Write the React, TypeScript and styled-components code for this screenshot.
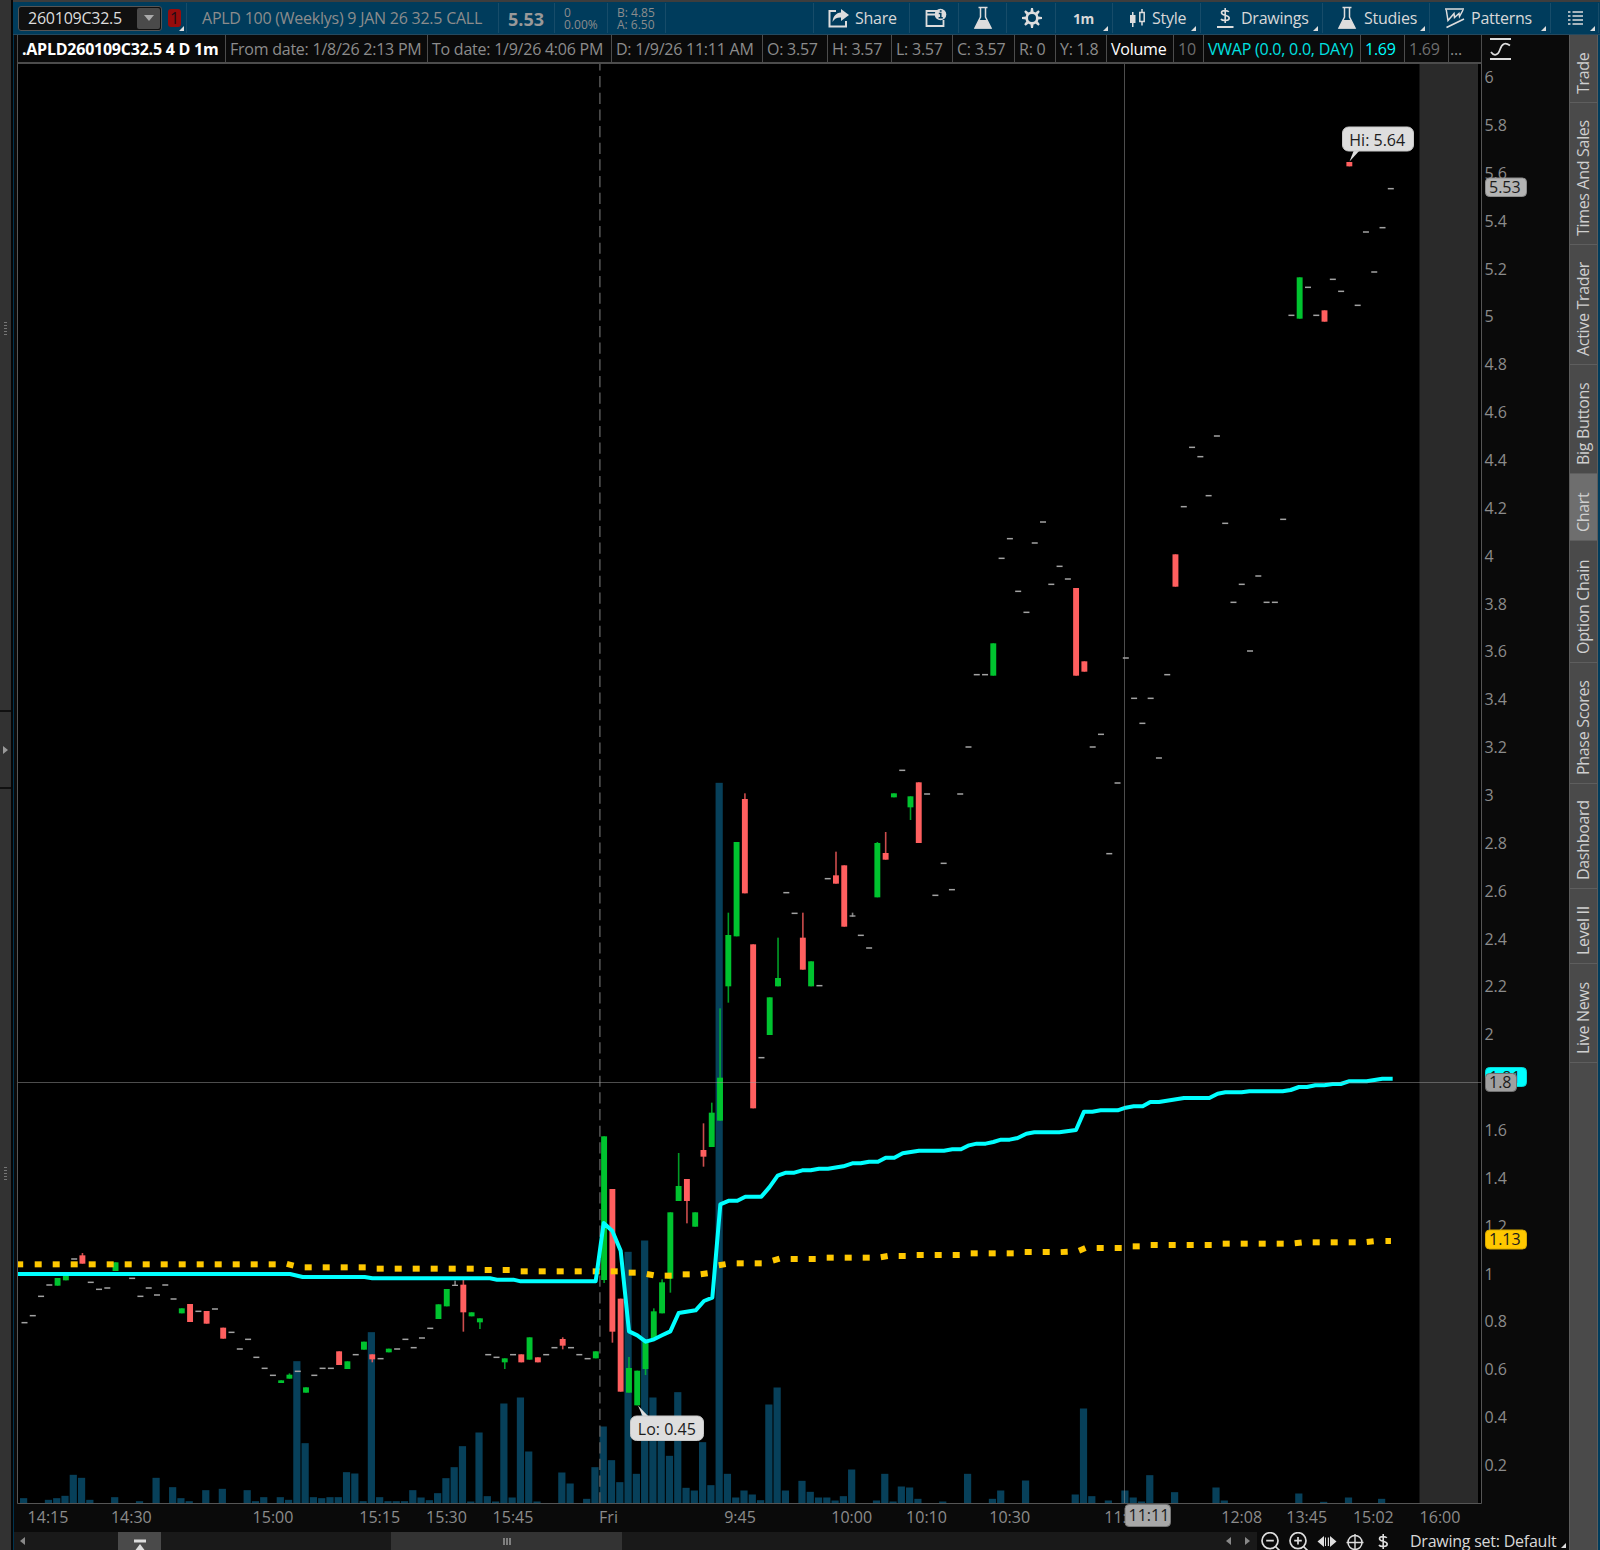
import React from "react";
import styled, { createGlobalStyle, css } from "styled-components";

const FONT = '"Open Sans", "Noto Sans", sans-serif';
const GREEN = "#00c32f";
const RED = "#ff5f5f";
const CYAN = "#00ffff";
const AMBER = "#ffc800";
const MUTED = "#8c8c8c";
const BLUE = "#003c5c";

const GlobalStyle = createGlobalStyle`
  body { margin: 0; background: #0a0a0a; }
  * { box-sizing: border-box; }
`;

const Page = styled.div`
  display: flex;
  width: 1600px;
  height: 1550px;
  overflow: hidden;
  background: #0a0a0a;
  font-family: ${FONT};
  font-size: 16px;
  letter-spacing: -0.24px;
  color: #d8d8d8;
  white-space: nowrap;
`;

const LeftRail = styled.div`
  display: flex;
  flex-direction: column;
  justify-content: space-between;
  flex: none;
  width: 13px;
  background: #323232;
  border-right: 2px solid #050505;
`;
const RailPart = styled.div<{ $h: number; $center?: boolean }>`
  height: ${(p) => p.$h}px;
  display: flex;
  align-items: ${(p) => (p.$center ? "center" : "flex-start")};
  justify-content: center;
  ${(p) => p.$center && css`border: solid #101010; border-width: 2px 0;`}
`;
const Grip = styled.div<{ $top: number }>`
  width: 3px;
  height: 13px;
  margin-top: ${(p) => p.$top}px;
  background: repeating-linear-gradient(#777 0 1px, transparent 1px 3px);
`;

const Main = styled.div`
  flex: none;
  width: 1587px;
  display: flex;
  flex-direction: column;
`;
const Header = styled.div`
  display: flex;
  height: 35px;
  border-top: 2px solid #3d3d3d;
  border-bottom: 1px solid #24495f;
  background: ${BLUE};
  padding-left: 5px;
`;
const Cell = styled.div<{ $w: number; $pl?: number; $gap?: number }>`
  position: relative;
  display: flex;
  align-items: center;
  width: ${(p) => p.$w}px;
  height: 30px;
  margin-top: 1px;
  flex: none;
  padding-left: ${(p) => p.$pl ?? 0}px;
  gap: ${(p) => p.$gap ?? 8}px;
  border-right: 1px solid #174c69;
`;
const Tri = styled.i<{ $r?: number }>`
  position: absolute;
  right: ${(p) => p.$r ?? 4}px;
  bottom: 2px;
  width: 0;
  height: 0;
  border-left: 5px solid transparent;
  border-bottom: 5px solid #ddd;
`;
const SymbolBox = styled.div`
  display: flex;
  justify-content: space-between;
  width: 144px;
  height: 25px;
  padding: 1px 1px 1px 9px;
  background: #101010;
  border: 1px solid #555;
  border-radius: 3px;
  line-height: 21px;
  color: #ddd;
`;
const DropButton = styled.div`
  display: flex;
  align-items: center;
  justify-content: center;
  width: 23px;
  background: #4a4a4a;
  border-radius: 2px;
`;
const LinkBadge = styled.div`
  width: 13px;
  height: 18px;
  line-height: 18px;
  margin-left: -2px;
  border-radius: 3px;
  background: #970c0c;
  color: #1d0d15;
  text-align: center;
`;
const Muted = styled.span`
  color: ${MUTED};
`;
const LastPrice = styled.b`
  font-size: 18px;
  letter-spacing: 0;
  color: #999;
  padding-top: 2px;
`;
const Quote = styled.div`
  font-size: 12px;
  line-height: 12px;
  padding-top: 2px;
  letter-spacing: 0;
  color: ${MUTED};
`;
const Period = styled.b`
  font-size: 14px;
  letter-spacing: -0.6px;
`;

const Body = styled.div`
  flex: 1;
  display: flex;
  border-left: 1px solid #00334f;
`;
const ChartColumn = styled.div`
  flex: none;
  width: 1555px;
  display: flex;
  flex-direction: column;
`;
const StatusRow = styled.div`
  display: flex;
  height: 28px;
  padding-left: 3px;
`;
const Status = styled.div<{ $w: number; $c?: string; $b?: boolean; $first?: boolean; $pl?: number }>`
  width: ${(p) => p.$w}px;
  flex: none;
  padding-left: ${(p) => p.$pl ?? 4}px;
  line-height: 28px;
  overflow: hidden;
  color: ${(p) => p.$c ?? MUTED};
  font-weight: ${(p) => (p.$b ? 700 : 400)};
  border: 1px solid #4c4c4c;
  border-left-width: ${(p) => (p.$first ? 1 : 0)}px;
  border-top: 0;
`;
const StatusIcon = styled.div`
  padding: 2px 0 0 8px;
`;
const BottomBar = styled.div`
  display: flex;
  height: 18px;
`;
const ScrollTrack = styled.div`
  display: flex;
  width: 1243px;
  background: #191919;
`;
const Slot = styled.div<{ $w: number; $bg?: string }>`
  display: flex;
  justify-content: center;
  width: ${(p) => p.$w}px;
  background: ${(p) => p.$bg ?? "transparent"};
`;
const DrawingSet = styled.div`
  position: relative;
  width: 157px;
  line-height: 19px;
`;

const Tabs = styled.div`
  flex: none;
  width: 29px;
  display: flex;
  flex-direction: column;
  background: #4a4a4a;
  border-left: 1px solid #5c5c5c;
  border-right: 1px solid #5c5c5c;
`;
const Tab = styled.div<{ $h: number; $on?: boolean }>`
  height: ${(p) => p.$h}px;
  writing-mode: vertical-rl;
  transform: rotate(180deg);
  padding-top: 8px;
  line-height: 27px;
  letter-spacing: -0.32px;
  color: #cfcfcf;
  background: ${(p) => (p.$on ? "#6e6e6e" : "#4a4a4a")};
  border-top: 1px solid #5e5e5e;
`;
const Edge = styled.div`
  flex: none;
  width: 2px;
  background: ${BLUE};
`;

/* ---- market data: one entry per minute bar; distances in thirds of a pixel from the block's top ---- */
const BLOCKS: { start: number; top: number; bars: string }[] = [
  {
    start: 0,
    top: 1230,
    bars: "278 257 199 165 g144,167 g137,151 87 r76,101,69 157 178 174 g97,123 _ 145 199 174 195 165 207 g235,250 r222,276 244 r243,281 237 r293,326 307 357 328 382 415 436 g451,459 g434,446,430 424 g472,488 436 415 415 r364,405 g394,417 374 g335,359 r373,388,373,397 386 g356,367 357",
  },
  {
    start: 46,
    top: 1130,
    bars: "628 653 624 595 g523,567 g477,529 w464,468,452 r464,547,450,605 g547,559 g565,577,565,597 674 682 g685,697,685,717 674 r673,697 g622,689 r682,697 674 653 r627,647,622,658 653 674 686 g664,685 g19,450,19,459 r177,605,177,638 r506,785 g714,788,681 g722,826 g635,717,635,735 g544,628,535 g457,550,448 g247,446,247,488 g168,213,69 r147,213,147,280 g247,290",
  },
  {
    start: 82,
    top: 760,
    bars: "r1170,1190,1090,1220 g1058,1161,1028 g953,1082,745 g525,679,458,728 g246,529 r117,400,100 r553,1045 893 g712,825 g654,679,533 398 460 r533,629,458 g604,679 677 356 r346,371,275 r316,500 w466,470,458 526 564 g249,412,246 r279,299,216 g100,112 31 g109,142,109,180 r67,249 102 406 310 389 102",
  },
  {
    start: 114,
    top: 400,
    bars: "1041 824 824 g730,827 475 416 574 637 429 366 553 499 537 r564,827 r784,815 1041 1003 1361 1149 774 895 970 895 1074 824 r463,560 320 142 170 287 108 370 607 553 753 528 607 607 358",
  },
  {
    start: 153,
    top: 60,
    bars: "766 g652,776 682 766 r751,785 658 694 r306,319 736 516 636 503 386",
  },
];

const VOLUME =
  "0:16,3:11,4:16,5:23,6:86,7:77,8:11,11:19,14:7,16:77,18:49,19:16,20:7,22:40,24:44,27:40,28:7,29:19,31:19,32:11,33:427,34:181,35:19,36:16,37:19,38:19,39:94,40:90,41:7,42:514,43:19,44:7,45:7,46:7,47:40,48:18,49:10,50:31,51:76,52:109,53:172,54:6,55:213,56:22,57:6,58:300,59:18,60:318,61:156,62:6,65:93,66:60,68:14,69:109,70:231,71:130,72:64,73:755,74:89,75:789,76:318,77:200,78:143,79:334,80:47,81:39,82:184,83:55,84:2162,85:89,86:18,87:39,88:27,89:10,90:297,91:348,92:39,94:68,95:35,96:18,97:18,98:9,99:22,100:102,103:9,104:89,105:6,106:51,107:48,108:14,111:6,114:89,117:14,118:39,121:69,127:27,128:285,129:22,131:9,133:39,134:18,135:6,136:85,139:34,144:48,145:9,154:30,157:5,160:18,164:14";

type Run = { x: number; y: number; pts: string };
const VWAP: Run[] = [
  { x: 0, y: 1230, pts: "54,132 870,132 908,141 1094,141 1117,145" },
  {
    x: 400,
    y: 1130,
    pts: "0,445 270,445 291,449 340,449 362,454 587,454 611,279 637,303 662,362 687,604 712,616 737,635 762,628 786,616 811,604 836,549 887,541 912,513 937,503 961,223 987,212 1012,212 1036,200 1084,200 1108,172 1133,137 1158,128 1183,128",
  },
  {
    x: 800,
    y: 1050,
    pts: "7,361 32,361 57,356 84,356 130,349 157,340 182,340 207,335 234,335 257,323 283,323 308,310 357,302 432,302 457,298 483,298 507,286 530,281 557,281 580,276 603,269 629,269 653,264 679,251 703,247 778,247 828,240 852,185 877,185 902,181 953,181 977,173 1001,169 1028,169 1051,156 1077,156 1152,144",
  },
  {
    x: 1200,
    y: 1050,
    pts: "28,144 53,131 76,127 125,127 148,124 248,124 272,120 297,111 321,111 346,106 373,106 398,102 422,102 446,94 500,94 547,86 578,86",
  },
];
const BAND: Run[] = [
  { x: 0, y: 1230, pts: "40,103 865,103 900,112 1094,112 1125,116" },
  {
    x: 400,
    y: 1130,
    pts: "0,416 240,416 262,420 340,420 362,424 660,424 687,428 720,428 768,437 820,437 845,433 900,433 937,428 961,405 990,400 1090,400 1135,387",
  },
  {
    x: 800,
    y: 1050,
    pts: "0,627 55,627 70,623 234,623 264,618 320,618 340,615 480,615 500,610 640,610 660,606 790,606 832,604 856,594 970,594 990,589 1030,589 1050,585 1180,585",
  },
  { x: 1200, y: 1050, pts: "28,585 55,581 270,581 310,577 490,577 530,573 580,573" },
];
const expand = (runs: Run[]) =>
  runs.flatMap((r) =>
    r.pts.split(" ").map((p) => {
      const [a, b] = p.split(",").map(Number);
      return [r.x + a / 3, r.y + b / 3];
    })
  );

const barX = (i: number) => 24.5 + i * 8.2806;
const BASE = 1503.5;

const Candles = () => (
  <g>
    {BLOCKS.flatMap((b) =>
      b.bars.split(" ").map((t, k) => {
        if (t === "_") return null;
        const x = barX(b.start + k);
        const y = (v: number) => b.top + v / 3;
        if (/^\d/.test(t))
          return <rect key={b.start + k} x={x - 3} y={y(+t) - 0.75} width={6} height={1.5} fill="#a2a2a2" />;
        const n = t.slice(1).split(",").map(Number);
        const fill = t[0] === "g" ? GREEN : t[0] === "r" ? RED : "#a2a2a2";
        const hi = n[2] ?? n[0];
        const lo = n[3] ?? n[1];
        return (
          <g key={b.start + k} fill={fill}>
            <rect x={x - 0.8} y={y(hi)} width={1.6} height={(lo - hi) / 3} opacity={0.8} />
            <rect x={x - 3} y={y(n[0])} width={5.9} height={(n[1] - n[0]) / 3} />
          </g>
        );
      })
    )}
  </g>
);

const Volume = () => (
  <g fill="#07405a">
    {VOLUME.split(",").map((e) => {
      const [i, h] = e.split(":").map(Number);
      return <rect key={i} x={barX(i) - 4.5} y={BASE - h / 3} width={7.2} height={h / 3} />;
    })}
  </g>
);

const Band = () => {
  const pts = expand(BAND);
  return (
    <g fill={AMBER}>
      {Array.from({ length: 77 }, (_, k) => {
        const x = 20.2 + k * 18;
        let j = pts.findIndex((p) => p[0] > x);
        if (j < 1) j = j < 0 ? pts.length - 1 : 1;
        const [a, b] = [pts[j - 1], pts[j]];
        const m = (b[1] - a[1]) / (b[0] - a[0]);
        const y = a[1] + m * (x - a[0]);
        const w = k === 76 ? 5.5 : k === 0 ? 6 : 7;
        return (
          <rect key={k} x={x - w / 2} y={y - 3} width={w} height={6} transform={`rotate(${(Math.atan(m) * 180) / Math.PI} ${x} ${y})`} />
        );
      })}
    </g>
  );
};

const PRICES = Array.from({ length: 30 }, (_, i) => Math.round((6 - i * 0.2) * 10) / 10).filter((v) => v !== 1.8 && v > 0.1);
const TIMES: [number, string][] = [
  [48, "14:15"], [131.3, "14:30"], [273, "15:00"], [379.7, "15:15"], [446.5, "15:30"], [513, "15:45"], [608.5, "Fri"],
  [740, "9:45"], [851.7, "10:00"], [926.5, "10:10"], [1009.7, "10:30"], [1124.7, "11:11"], [1241.7, "12:08"],
  [1306.7, "13:45"], [1373.3, "15:02"], [1440, "16:00"],
];

type BadgeProps = { x: number; y: number; w: number; h: number; bg: string; label: string; stroke: string; pad?: number; drop?: number; r?: number };
const Badge = ({ x, y, w, h, bg, label, stroke, pad = 4, drop = 5.5, r = 4 }: BadgeProps) => (
  <g>
    <rect x={x + 0.5} y={y + 0.5} width={w - 1} height={h - 1} rx={r} fill={bg} stroke={stroke} />
    <text x={x + pad} y={y + h / 2 + drop} fill="#1c1c1c">{label}</text>
  </g>
);

const ChartSvg = styled.svg`
  display: block;
  font-family: ${FONT};
  font-size: 16px;
  letter-spacing: 0;
`;

const Chart = () => (
  <ChartSvg width={1555} height={1469} viewBox="14 63 1555 1469">
    <rect x={17} y={63} width={1464} height={1440} fill="#000" />
    <rect x={1419.5} y={63} width={58.5} height={1440} fill="#2a2a2a" />
    <Volume />
    <path d="M599.9 64V1503" stroke="#5c5c5c" strokeWidth={1.4} strokeDasharray="11.2 5.46" strokeDashoffset={4.6} />
    <Candles />
    <Band />
    <polyline points={expand(VWAP).map((p) => p.join(",")).join(" ")} fill="none" stroke={CYAN} strokeWidth={4} strokeLinejoin="round" />
    <path d="M17 1082.5H1481M1124.5 63V1503" stroke="#a0a0a0" strokeOpacity={0.48} />
    <path d="M17.5 63V1503.5H1481.5V63" fill="none" stroke="#555" />
    <path d="M17 63.5H1482" stroke="#4c4c4c" />
    <g fill={MUTED}>
      {PRICES.map((v) => (
        <text key={v} x={1484.4} y={Math.round(77.7 + (6 - v) * 239.3 + 5.4)}>{v}</text>
      ))}
      {TIMES.map(([x, t]) => (
        <text key={t} x={x} y={1522.5} textAnchor="middle">{t}</text>
      ))}
    </g>
    <Badge x={1485} y={177.5} w={42} h={19.5} bg="#b4b4b4" stroke="#8c8c8c" label="5.53" />
    <Badge x={1485} y={1067} w={42} h={20} bg={CYAN} stroke="#00d8d8" label="1.81" />
    <Badge x={1485} y={1073} w={32} h={19} bg="#a0a0a0" stroke="#707070" label="1.8" />
    <Badge x={1485} y={1229.5} w={42} h={20} bg={AMBER} stroke="#d6a800" label="1.13" />
    <Badge x={1124.5} y={1504} w={46.5} h={23} bg="#a8a8a8" stroke="#777" label="11:11" />
    <path d="M1349.5 161.5L1354 150H1360Z" fill="#dedede" />
    <Badge x={1342} y={126.5} w={72} h={25} bg="#dedede" stroke="#c8c8c8" label="Hi: 5.64" pad={7.3} drop={7} r={6} />
    <path d="M638 1405.5L643 1417H649Z" fill="#dedede" />
    <Badge x={630} y={1415.5} w={74} h={25.5} bg="#dedede" stroke="#c8c8c8" label="Lo: 0.45" pad={7.8} drop={6.5} r={6} />
  </ChartSvg>
);

/* ---- icons ---- */
const Svg = styled.svg`
  display: block;
  flex: none;
`;
const ShareIcon = () => (
  <Svg width={22} height={20} viewBox="0 0 22 20">
    <path d="M8 3H1.5V18.5H18V13" fill="none" stroke="#ddd" strokeWidth={2} />
    <path d="M13 1L21 7L13 13V9.5C9 9.3 6.5 10.5 4.5 14C5 8 8 5 13 4.5Z" fill="#ddd" />
  </Svg>
);
const FolderInfoIcon = () => (
  <Svg width={22} height={20} viewBox="0 0 22 20">
    <path d="M12 3H1.5V18H18.5V12M1 6.5H11" fill="none" stroke="#ddd" strokeWidth={1.8} />
    <circle cx={15.5} cy={6.5} r={5.8} fill="#ddd" />
    <path d="M13.8 5.5H15.8V9.5M13.6 9.8H17.8M14.8 3H16.6" fill="none" stroke={BLUE} strokeWidth={1.5} />
  </Svg>
);
const FlaskIcon = () => (
  <Svg width={20} height={24} viewBox="0 0 20 24">
    <path d="M5.5 1.5H14.5M7.5 1.5V11L2 22H18L12.5 11V1.5" fill="none" stroke="#ddd" strokeWidth={1.5} />
    <path d="M6.2 14H13.8L18.5 22.5H1.5Z" fill="#ddd" />
  </Svg>
);
const GearIcon = () => (
  <Svg width={22} height={22} viewBox="-11 -11 22 22">
    <circle r={5.3} fill="none" stroke="#ddd" strokeWidth={2.6} />
    {[0, 45, 90, 135, 180, 225, 270, 315].map((a) => (
      <path key={a} d="M-1.6 -6L-1 -10H1L1.6 -6Z" fill="#ddd" transform={`rotate(${a})`} />
    ))}
  </Svg>
);
const StyleIcon = () => (
  <Svg width={18} height={20} viewBox="0 0 18 20">
    <path d="M1 7H6.5V15H1ZM3 4H4.5V19H3Z" fill="#ddd" />
    <path d="M10.8 4.5H15.2V13.5H10.8ZM13 1V4.5M13 13.5V17.5" fill="none" stroke="#ddd" strokeWidth={1.5} />
  </Svg>
);
const DollarPath = "M12.8 4.8C12 3.5 5.5 2.5 5.5 5.8C5.5 9 13.2 7.5 13.2 11C13.2 14.5 6 13.8 5 12M9.2 1V16";
const DrawIcon = () => (
  <Svg width={18} height={22} viewBox="0 0 18 22">
    <path d={DollarPath} fill="none" stroke="#ddd" strokeWidth={1.6} />
    <path d="M1 20H17.5" stroke="#ddd" strokeWidth={2} />
  </Svg>
);
const PatternIcon = () => (
  <Svg width={20} height={22} viewBox="0 0 20 22">
    <path d="M0 2H19M1.500 20.500L19 12" stroke="#ddd" strokeWidth={1.700} />
    <path d="M1.200 2.500L3 13.500L9 6.500L9.500 10.500L14 6.500L14.500 9.500L18 3" fill="none" stroke="#ddd" strokeWidth={1.500} />
  </Svg>
);
const ListIcon = () => (
  <Svg width={15} height={16} viewBox="0 0 15 16">
    <path d="M0 2H2.5M4.500 2H15M0 6H2.5M4.500 6H15M0 10H2.5M4.500 10H15M0 14H2.5M4.500 14H15" stroke="#ddd" strokeWidth={1.6} />
  </Svg>
);
const CurveIcon = () => (
  <Svg width={22} height={24} viewBox="0 0 22 24">
    <path d="M0 2H21M0 22H21" stroke="#ddd" strokeWidth={2} />
    <path d="M1 15C4 19.500 8 18.500 10 12.500S15 5 20 8.500" fill="none" stroke="#ddd" strokeWidth={1.7} />
  </Svg>
);
const Arrow = ({ flip }: { flip?: boolean }) => (
  <Svg width={5} height={18} viewBox="0 0 5 18">
    <path d={flip ? "M0 5L5 9L0 13Z" : "M5 5L0 9L5 13Z"} fill="#888" />
  </Svg>
);
const ZoomIcon = ({ plus }: { plus?: boolean }) => (
  <Svg width={22} height={18} viewBox="0 0 22 18">
    <circle cx={10} cy={8.7} r={8} fill="none" stroke="#ddd" strokeWidth={1.7} />
    <path d={"M6.2 8.7H13.8M15.5 14.5L20 19" + (plus ? "M10 4.9V12.5" : "")} stroke="#ddd" strokeWidth={1.7} />
  </Svg>
);
const PanIcon = () => (
  <Svg width={20} height={18} viewBox="0 0 20 18">
    <path d="M0.5 9.5L7 4V15ZM19.5 9.5L13 4V15ZM8 5.5H9V14H8ZM10.800 5.5H12V14H10.800Z" fill="#ddd" />
  </Svg>
);
const TargetIcon = () => (
  <Svg width={18} height={18} viewBox="0 0 18 18">
    <circle cx={9} cy={10.5} r={7} fill="none" stroke="#ddd" strokeWidth={1.5} />
    <path d="M0.5 10.5H17.5M9 2V18" stroke="#ddd" strokeWidth={1.4} />
  </Svg>
);

const STATUS: { w: number; t: string; c?: string; b?: boolean; pl?: number }[] = [
  { w: 209, t: ".APLD260109C32.5 4 D 1m", c: "#fff", b: true },
  { w: 202, t: "From date: 1/8/26 2:13 PM" },
  { w: 184, t: "To date: 1/9/26 4:06 PM" },
  { w: 151, t: "D: 1/9/26 11:11 AM" },
  { w: 65, t: "O: 3.57" },
  { w: 64, t: "H: 3.57" },
  { w: 61, t: "L: 3.57" },
  { w: 62, t: "C: 3.57" },
  { w: 41, t: "R: 0" },
  { w: 51, t: "Y: 1.8" },
  { w: 67, t: "Volume", c: "#fff" },
  { w: 30, t: "10", c: "#6e6e6e" },
  { w: 157, t: "VWAP (0.0, 0.0, DAY)", c: "#00e1e1" },
  { w: 44, t: "1.69", c: "#00ffff" },
  { w: 44, t: "1.69", c: "#6e6e6e" },
  { w: 33, t: "...", pl: 1 },
];

const TABS: [string, number][] = [
  ["Trade", 68], ["Times And Sales", 142], ["Active Trader", 120], ["Big Buttons", 109], ["Chart", 67],
  ["Option Chain", 122], ["Phase Scores", 121], ["Dashboard", 105], ["Level II", 75], ["Live News", 99],
];

export default function App() {
  return (
    <Page>
      <GlobalStyle />
      <LeftRail>
        <RailPart $h={710}><Grip $top={322} /></RailPart>
        <RailPart $h={79} $center>
          <Svg width={6} height={8}><path d="M0 0L5 4L0 8Z" fill="#999" /></Svg>
        </RailPart>
        <RailPart $h={761}><Grip $top={378} /></RailPart>
      </LeftRail>
      <Main>
        <Header>
          <Cell $w={169}>
            <SymbolBox>
              260109C32.5
              <DropButton><Svg width={10} height={6}><path d="M0 0H10L5 6Z" fill="#aaa" /></Svg></DropButton>
            </SymbolBox>
            <LinkBadge>1</LinkBadge>
            <Tri $r={2} />
          </Cell>
          <Cell $w={312} $pl={15}><Muted>APLD 100 (Weeklys) 9 JAN 26 32.5 CALL</Muted></Cell>
          <Cell $w={56} $pl={9}><LastPrice>5.53</LastPrice></Cell>
          <Cell $w={53} $pl={9}><Quote>0<br />0.00%</Quote></Cell>
          <Cell $w={58} $pl={9}><Quote>B: 4.85<br />A: 6.50</Quote></Cell>
          <Cell $w={148} />
          <Cell $w={96} $pl={14} $gap={5}><ShareIcon />Share</Cell>
          <Cell $w={49} $pl={15}><FolderInfoIcon /></Cell>
          <Cell $w={48} $pl={14}><FlaskIcon /></Cell>
          <Cell $w={49} $pl={14}><GearIcon /></Cell>
          <Cell $w={57} $pl={17}><Period>1m</Period><Tri /></Cell>
          <Cell $w={88} $pl={16} $gap={5}><StyleIcon />Style<Tri /></Cell>
          <Cell $w={122} $pl={15} $gap={7}><DrawIcon />Drawings<Tri /></Cell>
          <Cell $w={107} $pl={14} $gap={7}><FlaskIcon />Studies<Tri /></Cell>
          <Cell $w={121} $pl={15} $gap={6}><PatternIcon />Patterns<Tri /></Cell>
          <Cell $w={48} $pl={17}><ListIcon /><Tri $r={3} /></Cell>
        </Header>
        <Body>
          <ChartColumn>
            <StatusRow>
              {STATUS.map((s, i) => (
                <Status key={i} $w={s.w} $c={s.c} $b={s.b} $pl={s.pl} $first={i === 0}>{s.t}</Status>
              ))}
              <StatusIcon><CurveIcon /></StatusIcon>
            </StatusRow>
            <Chart />
            <BottomBar>
              <ScrollTrack>
                <Slot $w={17}><Arrow /></Slot>
                <Slot $w={87} />
                <Slot $w={43} $bg="#4a4a4a">
                  <Svg width={12} height={18}><path d="M0 9H12" stroke="#ddd" strokeWidth={3} /><path d="M6 12L12 20H0Z" fill="#ddd" /></Svg>
                </Slot>
                <Slot $w={230} />
                <Slot $w={231} $bg="#333">
                  <Svg width={8} height={18}><path d="M1 6V13M4 6V13M7 6V13" stroke="#999" strokeWidth={1.5} /></Svg>
                </Slot>
                <Slot $w={597} />
                <Slot $w={19}><Arrow /></Slot>
                <Slot $w={19}><Arrow flip /></Slot>
              </ScrollTrack>
              <Slot $w={28}><ZoomIcon /></Slot>
              <Slot $w={28}><ZoomIcon plus /></Slot>
              <Slot $w={28}><PanIcon /></Slot>
              <Slot $w={28}><TargetIcon /></Slot>
              <Slot $w={28}><Svg width={18} height={18}><path d={DollarPath} transform="translate(0 1)" fill="none" stroke="#ddd" strokeWidth={1.6} /></Svg></Slot>
              <Slot $w={13} />
              <DrawingSet>Drawing set: Default<Tri $r={1} /></DrawingSet>
            </BottomBar>
          </ChartColumn>
          <Tabs>
            {TABS.map(([t, h]) => (
              <Tab key={t} $h={h} $on={t === "Chart"}>{t}</Tab>
            ))}
          </Tabs>
          <Edge />
        </Body>
      </Main>
    </Page>
  );
}
